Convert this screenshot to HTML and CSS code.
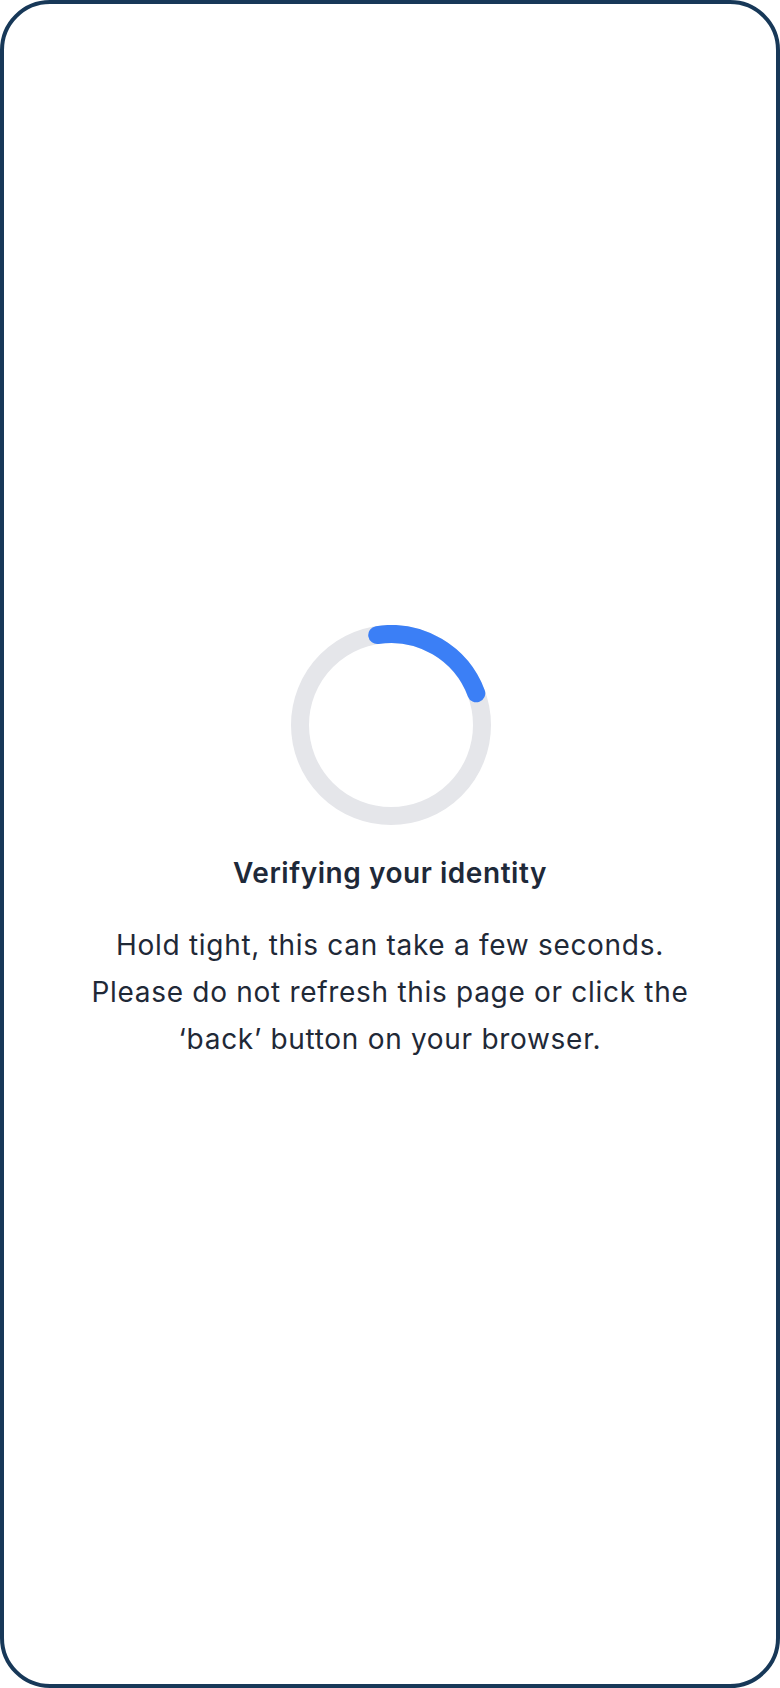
FILE: index.html
```html
<!DOCTYPE html>
<html lang="en">
<head>
<meta charset="utf-8">
<title>Verifying your identity</title>
<link rel="stylesheet" href="styles.css">
</head>
<body>
<div class="frame">
  <main class="content">
    <svg class="spinner" width="200" height="200" viewBox="0 0 200 200" aria-hidden="true">
      <circle cx="100" cy="100" r="91" fill="none" stroke="#e5e6ea" stroke-width="18"/>
      <path d="M86.23 10.04 A91 91 0 0 1 185.3 68.28" fill="none" stroke="#3b7ff6" stroke-width="18" stroke-linecap="round"/>
    </svg>
    <h1 class="title">Verifying your identity</h1>
    <p class="message">Hold tight, this can take a few seconds.<br>Please do not refresh this page or click the<br>‘back’ button on your browser.</p>
  </main>
</div>
</body>
</html>
```
FILE: styles.css
```css
html, body {
  margin: 0;
  padding: 0;
  background: #ffffff;
}

body {
  width: 780px;
  height: 1688px;
  font-family: "Inter", "Liberation Sans", sans-serif;
  color: #1f2937;
}

.frame {
  box-sizing: border-box;
  width: 100%;
  height: 100%;
  border: 4px solid #173858;
  border-radius: 50px;
  display: flex;
  align-items: center;
  justify-content: center;
}

.content {
  display: flex;
  flex-direction: column;
  align-items: center;
  text-align: center;
  margin-top: -1px;
}

.spinner {
  display: block;
  width: 200px;
  height: 200px;
  margin-left: 2px;
}

.title {
  margin: 30px 0 0;
  font-size: 28px;
  line-height: 36px;
  font-weight: 600;
  letter-spacing: 0.55px;
  color: #1e2939;
}

.message {
  margin: 31px 0 0;
  font-size: 28px;
  line-height: 47px;
  font-weight: 400;
  letter-spacing: 0.7px;
  color: #1f2937;
}
```
